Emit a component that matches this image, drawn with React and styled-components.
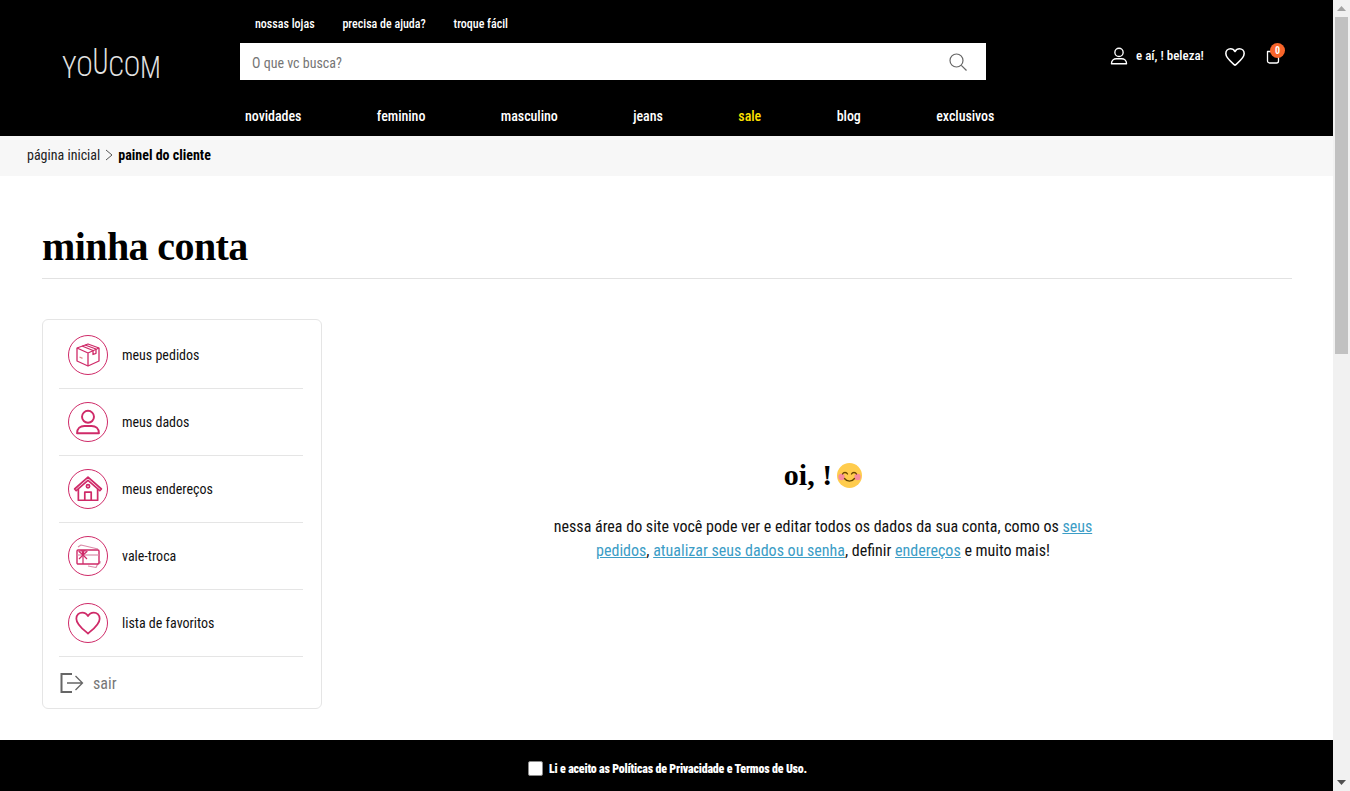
import * as React from 'react'
import styled, {createGlobalStyle} from 'styled-components'

const condensed = `"Roboto Condensed", "Liberation Sans Narrow", Roboto, sans-serif`
const serif = `"Liberation Serif", serif`
const pink = '#cf2a68'

const Global = createGlobalStyle`
    html, body {
        margin: 0;
        height: 100%;
        overflow: hidden;
    }
    body {
        font-family: ${condensed};
        font-stretch: condensed;
        color: #000;
        background: #fff;
    }
    * {
        box-sizing: border-box;
    }
`

const Window = styled.div`
    display: flex;
    height: 791px;
`

const Page = styled.div`
    flex: 1;
    min-width: 0;
    display: flex;
    flex-direction: column;
`

const Scrollbar = styled.div`
    width: 17px;
    display: flex;
    flex-direction: column;
    align-items: center;
    background: #f1f1f1;
`

const ScrollArrow = styled.div`
    height: 17px;
    width: 100%;
    display: flex;
    align-items: center;
    justify-content: center;
`

const ScrollThumb = styled.div`
    width: 13px;
    height: 337px;
    background: #c1c1c1;
`

const ScrollTrack = styled.div`
    flex: 1;
`

const Header = styled.header`
    height: 136px;
    background: #000;
    display: grid;
    grid-template-columns: 240px 746px 1fr;
    grid-template-rows: 43px 37px 1fr;
`

const LogoCell = styled.div`
    grid-row: 1 / 3;
    padding: 52px 0 0 62px;
`

const Logo = styled.div`
    display: flex;
    align-items: flex-end;
    height: 30px;
    color: #e2e2e2;
    font-weight: 300;
    font-size: 28px;
    line-height: 30px;
    letter-spacing: -0.3px;
`

const LogoLetter = styled.span`
    display: block;
    transform-origin: bottom left;
    transform: ${(p) => p.$transform || 'none'};
`

const TopLinks = styled.nav`
    display: flex;
    align-items: center;
    gap: 27.8px;
    padding: 4px 0 0 15px;
    color: #fff;
    font-size: 12px;
    font-weight: 500;
`

const Search = styled.div`
    grid-column: 2;
    display: flex;
    align-items: center;
    justify-content: space-between;
    padding: 0 19px 0 12px;
    background: #fff;
    color: #757575;
    font-size: 14px;
`

const SearchHint = styled.span`
    padding-top: 2px;
`

const UserArea = styled.div`
    grid-column: 3;
    grid-row: 1 / 3;
    display: flex;
    align-items: flex-start;
    padding: 46px 0 0 124px;
    color: #fff;
    font-size: 13px;
    font-weight: 500;
`

const Greeting = styled.span`
    display: flex;
    align-items: center;
    gap: 8px;
    height: 18px;

    svg {
        margin-top: 2px;
    }
`

const Wish = styled.span`
    display: flex;
    margin-left: 20px;
`

const Bag = styled.span`
    position: relative;
    display: flex;
    margin: 2px 0 0 20px;
`

const BagCount = styled.span`
    position: absolute;
    top: -5px;
    left: 4px;
    width: 15px;
    height: 15px;
    border-radius: 50%;
    background: #f8652a;
    color: #fff;
    font-size: 10px;
    font-weight: 700;
    line-height: 15px;
    text-align: center;
`

const MainNav = styled.nav`
    grid-column: 2 / 4;
    display: flex;
    align-items: center;
    gap: 75.5px;
    padding: 16px 0 0 5px;
    color: #fff;
    font-size: 14px;
    font-weight: 500;
    letter-spacing: -0.05px;
`

const NavItem = styled.a`
    color: ${(p) => (p.$sale ? '#ffe100' : '#fff')};
`

const Breadcrumb = styled.div`
    height: 40px;
    background: #f7f7f7;
    display: flex;
    align-items: center;
    gap: 5px;
    padding: 0 0 2px 27px;
    font-size: 14px;
    color: #222;
`

const Current = styled.strong`
    color: #000;
    font-weight: 700;
`

const Content = styled.main`
    flex: 1;
    padding: 46px 41px 0 42px;
    min-height: 0;
`

const Title = styled.h1`
    margin: 0 0 40px;
    height: 57px;
    padding-top: 1px;
    border-bottom: 1px solid #e2e2e2;
    font-family: ${serif};
    font-stretch: normal;
    font-size: 40px;
    line-height: 48px;
    letter-spacing: -0.6px;
    font-weight: 700;
`

const Columns = styled.div`
    display: flex;
    gap: 30px;
`

const Card = styled.aside`
    width: 280px;
    height: 390px;
    flex: none;
    padding: 2px 18px 0 16px;
    border: 1px solid #e5e5e5;
    border-radius: 6px;
`

const MenuRow = styled.a`
    display: flex;
    align-items: center;
    gap: 14px;
    height: 67px;
    padding-left: 9px;
    border-bottom: 1px solid #e5e5e5;
    font-size: 14px;
    color: #111;
`

const Circle = styled.span`
    width: 40px;
    height: 40px;
    flex: none;
    display: flex;
    align-items: center;
    justify-content: center;
    border: 1.5px solid ${pink};
    border-radius: 50%;
`

const Logout = styled.a`
    display: flex;
    align-items: center;
    gap: 9px;
    height: 52px;
    padding: 0 0 0 1px;
    font-size: 16px;
    color: #777;
`

const Welcome = styled.section`
    flex: 1;
    display: flex;
    flex-direction: column;
    align-items: center;
    padding: 139px 0 0 2px;
`

const Hello = styled.h2`
    display: flex;
    align-items: center;
    gap: 5px;
    margin: 0 0 23px;
    height: 34px;
    font-family: ${serif};
    font-stretch: normal;
    font-size: 30px;
    font-weight: 700;
`

const Message = styled.p`
    width: 550px;
    margin: 0;
    text-align: center;
    font-size: 16px;
    line-height: 24px;
    color: #111;
`

const Link = styled.a`
    color: #3c9dc6;
    text-decoration: underline;
`

const CookieBar = styled.footer`
    height: 51px;
    flex: none;
    background: #000;
    display: flex;
    align-items: center;
    justify-content: center;
    gap: 6px;
    padding: 6px 0 0 2px;
    color: #fff;
    font-size: 12px;
    font-weight: 900;
    letter-spacing: -0.21px;
`

const Check = styled.span`
    width: 15px;
    height: 15px;
    background: #fff;
    border: 1px solid #8a8a8a;
    border-radius: 2px;
`

const PersonIcon = ({color, size, width = 1.6}) => (
    <svg width={size} height={size} viewBox="0 0 20 20" fill="none" stroke={color} strokeWidth={width}>
        <circle cx="10" cy="6" r="4.6" />
        <path d="M1.6 18.6c0-3.6 2.6-5.6 5.6-5.6h5.6c3 0 5.600 2 5.600 5.600z" strokeLinejoin="round" />
    </svg>
)

const HeartIcon = ({color, size, width = 1.6}) => (
    <svg width={size} height={size} viewBox="0 0 24 24" fill="none" stroke={color} strokeWidth={width} strokeLinejoin="round">
        <path d="M12 21C8 17.6 2 13.4 2 8.3 2 5.2 4.4 3 7.1 3c2 0 3.800 1 4.900 3 1.100-2 2.900-3 4.900-3C19.600 3 22 5.200 22 8.300 22 13.400 16 17.600 12 21z" />
    </svg>
)

const BoxIcon = () => (
    <svg width="26" height="26" viewBox="0 0 26 26" fill="none" stroke={pink} strokeWidth="1.300" strokeLinejoin="round">
        <path d="M13 2l11 4v13l-11 5-11-5V6z" />
        <path d="M2 6l11 5 11-5M13 11v13" />
        <path d="M7 4l11 4.500v4l3-1.200V7M10 3l11 4" />
        <path d="M4.500 15l3 1.300" stroke="#d88" />
    </svg>
)

const HouseIcon = () => (
    <svg width="30" height="28" viewBox="0 0 28 26" fill="none" stroke={pink} strokeWidth="1.600" strokeLinejoin="round">
        <path d="M1.500 13L14 2l12.500 11-1.500 1.500L14 5 3 14.500z" />
        <path d="M5 13v10.500h18V13" />
        <path d="M11 23.500V16h6v7.500" />
        <circle cx="14" cy="10.500" r="1.500" />
    </svg>
)

const GiftIcon = () => (
    <svg width="28" height="26" viewBox="0 0 28 26" fill="none" stroke={pink} strokeWidth="1.200" strokeLinejoin="round">
        <path d="M4 4l3-2 17 4M24 20l2 0 0-2M14 23l8 1.500 2-4" stroke="#d98ba8" />
        <rect x="3" y="7" width="22" height="14" rx="1" strokeWidth="1.400" />
        <path d="M9 7v14" />
        <path d="M3 12h22" stroke="#d98ba8" />
        <path d="M9 12L5 8.500 8 7.500zM9 12l4-3.500-3-1zM9 12l-4 4M9 12l4 4" />
    </svg>
)

const SmileIcon = () => (
    <svg width="25" height="25" viewBox="0 0 25 25">
        <circle cx="12.500" cy="12.500" r="12.500" fill="#ffcc4d" />
        <circle cx="4.500" cy="14" r="3.200" fill="#f78c9c" />
        <circle cx="20.500" cy="14" r="3.200" fill="#f78c9c" />
        <g fill="none" stroke="#664500" strokeWidth="1.300" strokeLinecap="round">
            <path d="M5.500 11c1-2 4-2 5 0M14.500 11c1-2 4-2 5 0" />
            <path d="M7.500 15.500c2.500 3.500 7.500 3.500 10 0" />
        </g>
    </svg>
)

const menu = [
    {label: 'meus pedidos', icon: <BoxIcon />},
    {label: 'meus dados', icon: <PersonIcon color={pink} size={26} width={1.5} />},
    {label: 'meus endereços', icon: <HouseIcon />},
    {label: 'vale-troca', icon: <GiftIcon />},
    {label: 'lista de favoritos', icon: <HeartIcon color={pink} size={28} width={1.5} />},
]

const nav = ['novidades', 'feminino', 'masculino', 'jeans', 'sale', 'blog', 'exclusivos']

const App = () => (
    <Window>
        <Global />
        <Page>
            <Header>
                <LogoCell>
                    <Logo>
                        <LogoLetter $transform="translateY(3px) scale(1, 1.1)">Y</LogoLetter>
                        <LogoLetter>O</LogoLetter>
                        <LogoLetter $transform="scale(1, 1.3)">U</LogoLetter>
                        <LogoLetter>C</LogoLetter>
                        <LogoLetter>O</LogoLetter>
                        <LogoLetter $transform="translateY(3px) scale(1, 1.1)">M</LogoLetter>
                    </Logo>
                </LogoCell>
                <TopLinks>
                    <span>nossas lojas</span>
                    <span>precisa de ajuda?</span>
                    <span>troque fácil</span>
                </TopLinks>
                <UserArea>
                    <Greeting>
                        <PersonIcon color="#fff" size={18} width={1.5} />
                        e aí, ! beleza!
                    </Greeting>
                    <Wish><HeartIcon color="#fff" size={22} width={1.7} /></Wish>
                    <Bag>
                        <svg width="14" height="16" viewBox="0 0 14 16" fill="none" stroke="#fff" strokeWidth="1.300">
                            <path d="M1.500 3.500h11v9.500a2 2 0 0 1-2 2h-7a2 2 0 0 1-2-2z" strokeLinejoin="round" />
                        </svg>
                        <BagCount>0</BagCount>
                    </Bag>
                </UserArea>
                <Search>
                    <SearchHint>O que vc busca?</SearchHint>
                    <svg width="18" height="18" viewBox="0 0 18 18" fill="none" stroke="#666" strokeWidth="1.200">
                        <circle cx="7.500" cy="7.500" r="6.500" />
                        <path d="M12.300 12.300L17.500 17.500" />
                    </svg>
                </Search>
                <MainNav>
                    {nav.map((item) => (
                        <NavItem key={item} $sale={item === 'sale'}>{item}</NavItem>
                    ))}
                </MainNav>
            </Header>
            <Breadcrumb>
                página inicial
                <svg width="8" height="12" viewBox="0 0 8 12" fill="none" stroke="#555" strokeWidth="1">
                    <path d="M1 1l6 5-6 5" />
                </svg>
                <Current>painel do cliente</Current>
            </Breadcrumb>
            <Content>
                <Title>minha conta</Title>
                <Columns>
                    <Card>
                        {menu.map((item) => (
                            <MenuRow key={item.label}>
                                <Circle>{item.icon}</Circle>
                                {item.label}
                            </MenuRow>
                        ))}
                        <Logout>
                            <svg width="24" height="20" viewBox="0 0 24 20" fill="none" stroke="#666" strokeWidth="2">
                                <path d="M12 1H1.500v18H12" />
                                <path d="M7 10h15.500M15.500 3l7 7-7 7" strokeWidth="1.300" />
                            </svg>
                            sair
                        </Logout>
                    </Card>
                    <Welcome>
                        <Hello>oi, ! <SmileIcon /></Hello>
                        <Message>
                            nessa área do site você pode ver e editar todos os dados da sua conta, como os <Link>seus pedidos</Link>, <Link>atualizar seus dados ou senha</Link>, definir <Link>endereços</Link> e muito mais!
                        </Message>
                    </Welcome>
                </Columns>
            </Content>
            <CookieBar>
                <Check />
                Li e aceito as Políticas de Privacidade e Termos de Uso.
            </CookieBar>
        </Page>
        <Scrollbar>
            <ScrollArrow>
                <svg width="9" height="5" viewBox="0 0 9 5"><path d="M4.500 0L9 5H0z" fill="#a3a3a3" /></svg>
            </ScrollArrow>
            <ScrollThumb />
            <ScrollTrack />
            <ScrollArrow>
                <svg width="9" height="5" viewBox="0 0 9 5"><path d="M0 0h9L4.500 5z" fill="#505050" /></svg>
            </ScrollArrow>
        </Scrollbar>
    </Window>
)

export default App
